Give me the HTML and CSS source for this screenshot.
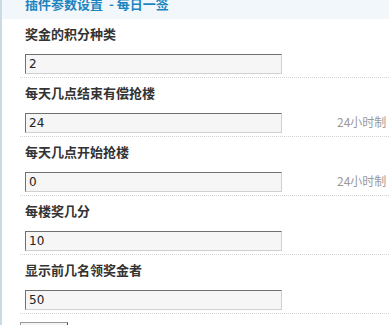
FILE: index.html
```html
<!DOCTYPE html>
<html lang="zh-CN">
<head>
<meta charset="utf-8">
<title>插件参数设置 - 每日一签</title>
<link rel="stylesheet" href="styles.css">
</head>
<body>
<div class="panel">
  <div class="head"><h3 class="title">插件参数设置 &nbsp;- 每日一签</h3></div>
  <div class="rows">
    <div class="row">
      <div class="label">奖金的积分种类</div>
      <div class="field"><input class="txt" type="text" value="2"></div>
    </div>
    <div class="row">
      <div class="label">每天几点结束有偿抢楼</div>
      <div class="field"><input class="txt" type="text" value="24"><span class="hint">24小时制</span></div>
    </div>
    <div class="row">
      <div class="label">每天几点开始抢楼</div>
      <div class="field"><input class="txt" type="text" value="0"><span class="hint">24小时制</span></div>
    </div>
    <div class="row">
      <div class="label">每楼奖几分</div>
      <div class="field"><input class="txt" type="text" value="10"></div>
    </div>
    <div class="row">
      <div class="label">显示前几名领奖金者</div>
      <div class="field"><input class="txt" type="text" value="50"></div>
    </div>
  </div>
  <div class="actions"><button class="btn" type="button">提交</button></div>
</div>
</body>
</html>
```

FILE: styles.css
```css
html, body {
  margin: 0;
  padding: 0;
  background: #ffffff;
  overflow: hidden;
}
body {
  width: 389px;
  height: 325px;
  font-family: "Noto Sans CJK SC", "DejaVu Sans", sans-serif;
  color: #333;
}
.panel {
  border-left: 2px solid #c9dae2;
  height: 325px;
  box-sizing: border-box;
}
.head {
  background: #f2f7fb;
  height: 19px;
  overflow: hidden;
}
.title {
  margin: -4px 0 0 23px;
  font-size: 13px;
  line-height: 16px;
  font-weight: bold;
  color: #1d84bf;
}
.rows {
  margin-left: 18px;
}
.row {
  padding: 5px 0 3px 5px;
  border-bottom: 1px dotted #d4d4d4;
}
.label {
  font-size: 13px;
  line-height: 19px;
  font-weight: bold;
  color: #333;
}
.field {
  margin-top: 11px;
  display: flex;
  align-items: center;
}
.txt {
  width: 257px;
  height: 20px;
  box-sizing: border-box;
  margin: 0;
  padding: 0 3px;
  border-style: solid;
  border-width: 1px;
  border-color: #707070 #d0d0d0 #d0d0d0 #707070;
  background: #f6f6f6;
  font-family: "DejaVu Sans", sans-serif;
  font-size: 12px;
  color: #222;
  outline: none;
}
.hint {
  margin-left: 55px;
  margin-top: -3px;
  font-size: 12px;
  line-height: 14px;
  color: #9a9a9a;
  white-space: nowrap;
  font-family: "Noto Sans CJK SC", sans-serif;
}
.actions {
  margin: 8px 0 0 18px;
}
.btn {
  width: 48px;
  height: 24px;
  margin: 0;
  padding: 8px 0 0;
  border: 1px solid #9a9a9a;
  border-right-color: #555;
  background: #f4f4f4;
  font-size: 12px;
  line-height: 14px;
  color: #333;
  vertical-align: top;
}
```
